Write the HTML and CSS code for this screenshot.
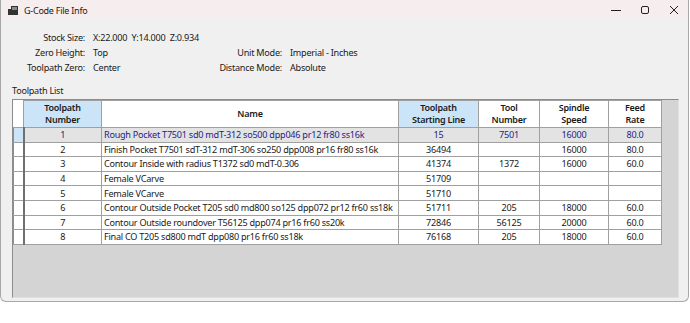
FILE: index.html
```html
<!DOCTYPE html>
<html lang="en">
<head>
    <meta charset="UTF-8">
    <title>G-Code File Info</title>
    <link rel="stylesheet" href="styles.css">
</head>
<body>
    <div class="window">
        <div class="titlebar">
            <svg class="app-icon" width="10" height="9" viewBox="0 0 10 9">
                <rect x="0" y="3" width="3" height="6" fill="#333"/>
                <rect x="3" y="0" width="7" height="9" fill="#333"/>
                <rect x="4" y="1" width="5" height="3" fill="#888"/>
            </svg>
            <span class="title">G-Code File Info</span>
            <div class="controls">
                <svg width="10" height="10" viewBox="0 0 10 10"><line x1="0" y1="5.5" x2="10" y2="5.5" stroke="#222" stroke-width="1"/></svg>
                <svg width="10" height="10" viewBox="0 0 10 10"><rect x="1.5" y="1.5" width="7" height="7" rx="1.5" fill="none" stroke="#222" stroke-width="1"/></svg>
                <svg width="10" height="10" viewBox="0 0 10 10"><path d="M1 1 L9 9 M9 1 L1 9" stroke="#222" stroke-width="1"/></svg>
            </div>
        </div>
        <div class="content">
            <div class="info">
                <span class="lbl">Stock Size:</span>
                <span class="val wide">X:22.000&nbsp; Y:14.000&nbsp; Z:0.934</span>
                <span class="lbl">Zero Height:</span>
                <span class="val">Top</span>
                <span class="lbl">Unit Mode:</span>
                <span class="val">Imperial - Inches</span>
                <span class="lbl">Toolpath Zero:</span>
                <span class="val">Center</span>
                <span class="lbl">Distance Mode:</span>
                <span class="val">Absolute</span>
            </div>
            <div class="list-label">Toolpath List</div>
            <div class="grid-box">
                <table class="grid">
                    <colgroup>
                        <col class="c-rh"><col class="c-num"><col class="c-name"><col class="c-line"><col class="c-tool"><col class="c-speed"><col class="c-feed">
                    </colgroup>
                    <thead>
                        <tr>
                            <th class="rh"></th>
                            <th class="active">Toolpath<br>Number</th>
                            <th>Name</th>
                            <th class="active">Toolpath<br>Starting Line</th>
                            <th>Tool<br>Number</th>
                            <th>Spindle<br>Speed</th>
                            <th>Feed<br>Rate</th>
                        </tr>
                    </thead>
                    <tbody>
                        <tr class="selected">
                            <td class="rh"></td><td class="c">1</td><td>Rough Pocket T7501 sd0 mdT-312 so500 dpp046 pr12 fr80 ss16k</td><td class="c">15</td><td class="c">7501</td><td class="c">16000</td><td class="c">80.0</td>
                        </tr>
                        <tr>
                            <td class="rh"></td><td class="c">2</td><td>Finish Pocket T7501 sdT-312 mdT-306 so250 dpp008 pr16 fr80 ss16k</td><td class="c">36494</td><td class="c"></td><td class="c">16000</td><td class="c">80.0</td>
                        </tr>
                        <tr>
                            <td class="rh"></td><td class="c">3</td><td>Contour Inside with radius T1372 sd0 mdT-0.306</td><td class="c">41374</td><td class="c">1372</td><td class="c">16000</td><td class="c">60.0</td>
                        </tr>
                        <tr>
                            <td class="rh"></td><td class="c">4</td><td>Female VCarve</td><td class="c">51709</td><td class="c"></td><td class="c"></td><td class="c"></td>
                        </tr>
                        <tr>
                            <td class="rh"></td><td class="c">5</td><td>Female VCarve</td><td class="c">51710</td><td class="c"></td><td class="c"></td><td class="c"></td>
                        </tr>
                        <tr>
                            <td class="rh"></td><td class="c">6</td><td>Contour Outside Pocket T205 sd0 md800 so125 dpp072 pr12 fr60 ss18k</td><td class="c">51711</td><td class="c">205</td><td class="c">18000</td><td class="c">60.0</td>
                        </tr>
                        <tr>
                            <td class="rh"></td><td class="c">7</td><td>Contour Outside roundover T56125 dpp074 pr16 fr60 ss20k</td><td class="c">72846</td><td class="c">56125</td><td class="c">20000</td><td class="c">60.0</td>
                        </tr>
                        <tr>
                            <td class="rh"></td><td class="c">8</td><td>Final CO T205 sd800 mdT dpp080 pr16 fr60 ss18k</td><td class="c">76168</td><td class="c">205</td><td class="c">18000</td><td class="c">60.0</td>
                        </tr>
                    </tbody>
                </table>
            </div>
        </div>
    </div>
</body>
</html>
```

FILE: styles.css
```css
body {
    margin: 0;
    padding: 0;
    background-color: #ffffff;
    font-family: "Noto Sans", Arial, sans-serif;
    font-size: 9.1px;
    letter-spacing: -0.25px;
    color: #1a1a1a;
}
.window {
    width: 687px;
    height: 301px;
    background-color: #f0f0f0;
    border: 1px solid #a8a8a8;
    border-top: none;
    border-radius: 0 0 6px 6px;
}
.titlebar {
    height: 20px;
    display: flex;
    align-items: center;
    background-color: #f6eeee;
    padding-left: 7px;
}
.title {
    margin-left: 6px;
    font-size: 9px;
}
.controls {
    margin-left: auto;
    display: flex;
    gap: 19px;
    padding-right: 9px;
}
.content {
    padding: 10px 9px 0 11px;
}
.info {
    display: grid;
    grid-template-columns: 73px 100px 81px auto;
    column-gap: 8px;
    grid-auto-rows: 15px;
    align-items: center;
}
.lbl {
    text-align: right;
}
.val.wide {
    grid-column: 2 / span 3;
}
.list-label {
    margin-top: 8px;
    height: 15px;
    line-height: 15px;
}
.grid-box {
    height: 197px;
    background-color: #d4d4d4;
    border: 1px solid #8c8c8c;
    border-right-color: #e0e0e0;
    border-bottom-color: #e0e0e0;
    margin-top: 1px;
}
.grid {
    border-collapse: collapse;
    table-layout: fixed;
    width: 648px;
    background-color: #ffffff;
}
.c-rh { width: 10px; }
.c-num { width: 78px; }
.c-name { width: 297px; }
.c-line { width: 80px; }
.c-tool { width: 61px; }
.c-speed { width: 69px; }
.c-feed { width: 53px; }
.grid th {
    height: 26px;
    font-weight: 600;
    font-size: 9px;
    line-height: 12px;
    border: 1px solid #a0a0a0;
    background-color: #ffffff;
    padding: 0;
}
.grid th.active {
    background-color: #cce4f7;
}
.grid th.rh {
    border-left: none;
    border-top: none;
}
.grid td {
    height: 13.6px;
    padding: 0 0 0 2px;
    border: 1px solid #a0a0a0;
    white-space: nowrap;
    overflow: hidden;
    line-height: 13px;
}
.grid td.c {
    text-align: center;
    padding: 0;
}
.grid td.rh {
    padding: 0;
    border-left: 1px solid #8c8c8c;
    border-right: 2px solid #707070;
}
.grid tr.selected td {
    background-color: #e3e3e3;
    color: #1e1e8c;
}
.grid tr.selected td.rh {
    background-color: #cce4f7;
}
```
